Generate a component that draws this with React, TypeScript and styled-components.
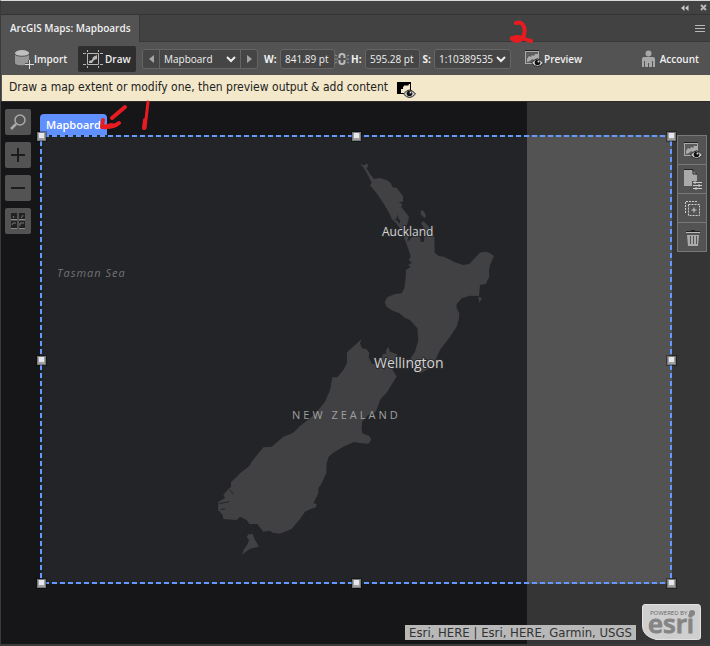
import React from "react";
import styled, { createGlobalStyle } from "styled-components";

const UI_FONT = '"Open Sans", "Noto Sans", sans-serif';
const TEXT_FONT = '"DejaVu Sans Condensed", "Noto Sans", sans-serif';

const GlobalStyle = createGlobalStyle`
  * { box-sizing: border-box; }
  body { margin: 0; background: #353535; }
  button, input, select { font: inherit; color: inherit; margin: 0; }
  svg { display: block; flex: none; }
`;

const Panel = styled.main`
  position: relative;
  display: flex;
  flex-direction: column;
  min-height: 100vh;
  border-top: 1px solid #d8d8d8;
  border-left: 1px solid #3a3a3a;
  border-bottom: 2px solid #3a3a3a;
  background: #535353;
  color: #f0f0f0;
  font: 10px/16px ${UI_FONT};
`;

const TitleBar = styled.header`
  display: flex;
  justify-content: flex-end;
  align-items: center;
  gap: 11px;
  height: 14px;
  padding-right: 3px;
  background: #424242;
  border-bottom: 1px solid #343434;
`;

const BareButton = styled.button`
  display: flex;
  align-items: center;
  padding: 0;
  border: 0;
  background: none;
  cursor: pointer;
`;

const TabRow = styled.nav`
  display: flex;
  align-items: stretch;
  justify-content: space-between;
  height: 27px;
  padding-right: 5px;
  background: linear-gradient(#424242 26px, #383838 26px);
`;

const Tab = styled.button`
  padding: 0 8px 2px 9px;
  border: 0;
  border-right: 1px solid #383838;
  background: #535353;
  font-weight: 600;
`;

const Toolbar = styled.div`
  display: flex;
  align-items: center;
  height: 33px;
  padding: 0 11px 0 5px;
`;

const ToolButton = styled.button<{ $active?: boolean }>`
  display: flex;
  align-items: center;
  gap: 2px;
  height: 26px;
  padding: 0 5px;
  border: 0;
  border-radius: 2px;
  background: ${(p) => (p.$active ? "#2e2e2e" : "transparent")};
  font-weight: 600;
  cursor: pointer;
`;

const Import = styled(ToolButton)`
  gap: 0;
  width: 72px;
  padding: 0 0 0 8px;
`;

const Draw = styled(ToolButton)`
  width: 58px;
`;

const Preview = styled(ToolButton)`
  gap: 0;
  margin-left: 9px;
`;

const Account = styled(ToolButton)`
  gap: 5px;
  margin-left: auto;
  padding: 0;
`;

const Stepper = styled.div`
  display: flex;
  height: 20px;
  margin: 0 6px;
  border: 1px solid #656565;
  border-radius: 3px;
  background: #454545;
`;

const StepButton = styled.button`
  display: grid;
  place-items: center;
  width: 16px;
  padding: 0;
  border: 0;
  background: transparent;
`;

const SelectBox = styled.div<{ $width: number; $framed?: boolean }>`
  position: relative;
  width: ${(p) => p.$width}px;
  height: ${(p) => (p.$framed ? "20px" : "18px")};
  border: solid #656565;
  border-width: ${(p) => (p.$framed ? "1px" : "0 1px")};
  border-radius: ${(p) => (p.$framed ? "3px" : "0")};
  background: #454545;

  select {
    appearance: none;
    display: block;
    width: 100%;
    height: 18px;
    padding: 0 14px 0 4px;
    border: 0;
    background: transparent;
  }

  svg {
    position: absolute;
    right: 4px;
    top: 6px;
    pointer-events: none;
  }
`;

const FieldLabel = styled.label`
  width: 14px;
  font-weight: 700;
`;

const WidthLabel = styled(FieldLabel)`
  width: 16px;
`;

const SizeInput = styled.input`
  width: 55px;
  height: 20px;
  padding: 0 4px;
  border: 1px solid #656565;
  border-radius: 3px;
  background: #454545;
`;

const LinkButton = styled(BareButton)`
  margin-right: 2px;
`;

const Hint = styled.p`
  display: flex;
  align-items: center;
  gap: 9px;
  height: 26px;
  margin: 0 0 0 1px;
  padding: 0 7px 2px;
  background: #f3e8ca;
  color: #222;
  font: 12px/16px ${TEXT_FONT};

  svg { margin-top: 6px; }
`;

const MapArea = styled.section`
  position: relative;
  flex: 1;
  display: grid;
  grid-template-columns: 39px minmax(0, 1fr) 38px;
  grid-template-rows: minmax(400px, 1fr) auto;
  padding-top: 33px;
  border-top: 1px solid #2c2c2c;
  background: linear-gradient(to left, #353535 183px, #161618 183px);
`;

const NavTools = styled.div`
  display: flex;
  flex-direction: column;
  gap: 7px;
  margin-top: -26px;
  padding-left: 4px;
`;

const NavButton = styled.button`
  display: grid;
  place-items: center;
  width: 26px;
  height: 26px;
  padding: 0;
  border: 0;
  border-radius: 2px;
  background: #535353;
`;

const Extent = styled.div`
  --h: repeating-linear-gradient(90deg, #6699ff 0 5px, transparent 5px 8px);
  --v: repeating-linear-gradient(180deg, #6699ff 0 5px, transparent 5px 8px);
  position: relative;
  background:
    var(--h) 4px 0 / 100% 2px no-repeat,
    var(--h) 4px 100% / 100% 2px no-repeat,
    var(--v) 0 6px / 2px 100% no-repeat,
    var(--v) 100% 6px / 2px 100% no-repeat,
    linear-gradient(to left, #535353 145px, #232427 145px);
`;

const ExtentTag = styled.span`
  position: absolute;
  left: 0;
  bottom: 100%;
  height: 21px;
  padding: 0 6px;
  border-radius: 4px 4px 0 0;
  background: #6090ff;
  color: #fff;
  font: 600 11px/22px ${UI_FONT};
`;

const Handle = styled.button<{ $x: number; $y: number }>`
  position: absolute;
  left: ${(p) => p.$x}%;
  top: ${(p) => p.$y}%;
  width: 9px;
  height: 9px;
  margin: ${(p) => (p.$y === 100 ? -5 : p.$y === 0 ? -3 : -4)}px 0 0 ${(p) => (p.$x === 0 ? -3 : p.$x === 100 ? -5 : -4)}px;
  padding: 0;
  border: 1px solid #777;
  outline: 1px solid #0005;
  background: linear-gradient(#e4e6f0, #e4e6f0) 50% 0 / 5px 5px no-repeat #a0a0a0;
`;

const Drawing = styled.svg`
  width: 100%;
  height: 100%;
`;

const ExtentTools = styled.div`
  align-self: start;
  justify-self: start;
  display: grid;
  grid-auto-rows: 28px;
  gap: 1px;
  width: 30px;
  margin-left: 5px;
  border: 1px solid #787878;
  background: #787878;
`;

const ExtentTool = styled.button`
  display: grid;
  place-items: center;
  padding: 2px 0 0 2px;
  border: 0;
  background: #535353;
`;

const Credits = styled.footer`
  grid-column: 1 / -1;
  display: flex;
  justify-content: flex-end;
  align-items: flex-end;
  gap: 6px;
  padding: 20px 9px 4px 0;
`;

const Sources = styled.span`
  padding: 0 4px;
  background: #b8b8b8;
  color: #333;
  font: 13px/15px ${TEXT_FONT};
`;

const Marks = styled.svg`
  position: absolute;
  left: 99px;
  top: 19px;
  pointer-events: none;
`;

const Chevron = () => (
  <svg width="10" height="7" viewBox="0 0 10 7" fill="none" stroke="#eee" strokeWidth="2">
    <path d="M1 1l4 4 4-4" />
  </svg>
);

const Eye = () => (
  <g transform="translate(6 8)">
    <path d="M.5 5Q6.500-3 12.500 5Q6.500 12 .5 5Z" fill="#ccc" stroke="#222" strokeWidth="1" />
    <circle cx="6.500" cy="4.500" r="2.800" fill="#111" />
    <circle cx="7.500" cy="3.500" r="1" fill="#ddd" />
  </g>
);

const PreviewIcon = () => (
  <svg width="19" height="18" viewBox="0 0 19 18">
    <rect x=".5" y="1.500" width="13" height="12" fill="#5c5c5c" stroke="#aaa" />
    <path d="M0 .5h14" stroke="#222" />
    <path d="M2 12V9l2-3 2 1 1-2 2 1 1-2h3v4l-4 2-2-1-2 2z" fill="#aaa" />
    <Eye />
  </svg>
);

const PreviewIconDark = () => (
  <svg width="19" height="18" viewBox="0 0 19 18">
    <path d="M0 1h14v12H0z" />
    <path d="M4 12V8h2V6l2-2 1 1 1-1 1 1 1-2h1v9z" fill="#f3e8ca" />
    <Eye />
  </svg>
);

const places: [string, number, number, number][] = [
  ["Auckland", 342, 101, 12],
  ["Wellington", 334, 233, 14],
];

const corners: [number, number, string][] = [
  [0, 0, "top left"],
  [50, 0, "top"],
  [100, 0, "top right"],
  [0, 50, "left"],
  [100, 50, "right"],
  [0, 100, "bottom left"],
  [50, 100, "bottom"],
  [100, 100, "bottom right"],
];

const NewZealand = () => (
  <Drawing viewBox="0 0 632 449" role="img" aria-label="Map of New Zealand" fontFamily={UI_FONT}>
    <g fill="#414143" transform="translate(300 15) scale(.33333)">
      <path d="M60 42L72 46 82 40 84 50 79 54 90 72 102 87 120 84 140 90 152 99 158 112 170 114 180 127 189 138V155L176 156 186 162 184 172 196 186 207 200 203 218 198 232 205 262 202 275 216 262 230 258 240 262 242 275 252 276 254 250 250 230 243 220 250 214 262 225 274 240 283 262 284 308 296 318 312 320 345 337 370 345 388 342 402 327 420 308 436 305 450 309 462 318 450 345 447 362 448 380 437 402 420 405 417 438 390 437 365 445 350 462V475L358 490 357 505 350 530 330 560 300 600 286 630 260 660 240 670 220 658 205 635 225 605 235 570 232 535 210 510 195 504 178 490 158 482 140 470 134 456 142 442 165 432 185 430 193 415 197 385 198 360 212 350 204 345 216 338 206 330 212 320 206 300 195 270 180 235 165 215 155 207 148 190 130 160 110 130 90 106 95 98 80 68 70 52Z" />
      <path d="M243 180l9 4 6 14-4 7-12-12zM414 440l12 4-8 14z" />
      <path d="M161 209l8-2 4-14 2 13 6 5-3 10-7-10z" fill="#232427" />
    </g>
    <g fill="#414143" transform="translate(160 185) scale(.33333)">
      <path d="M485 57L480 70 486 85 500 88 508 98 506 112 517 132 530 130 545 115 548 102 560 100 557 92 565 80 570 95 592 103 585 125 578 150 590 170 572 198 562 215 540 240 528 275 505 285 486 305 485 325 487 340 508 348 514 360 505 371 485 370 462 366 430 380 400 398 386 410 380 430 379 460 362 495 355 505V520L340 550 350 552 348 562 330 568 315 575 300 597 275 627 240 641 218 638 210 632 190 635 172 612 148 612 140 600 120 590 110 600 70 597 68 585 54 570 55 545 75 535 70 525 85 507 93 500V487L120 460 148 438 155 425 190 382 215 380 250 350 280 338 300 318 330 295 355 270 375 245 390 210 397 172 412 172 430 150 441 130V97Z" />
      <path d="M145 643L158 642 164 658 177 680 150 686 126 704 132 688 143 672 147 660 140 650Z" />
      <path d="M58 551L88 545M62 569L76 566M88 508L100 522" stroke="#232427" strokeWidth="3" />
    </g>
    {places.map(([name, x, y, size]) => (
      <text key={name} x={x} y={y} fontSize={size} fill="#d2d2d2" stroke="#2b2b2d" strokeWidth="2" paintOrder="stroke">
        {name}
      </text>
    ))}
    <text x="252" y="284" fontSize="11" fill="#a0a0a0" letterSpacing="3">NEW ZEALAND</text>
    <text x="17" y="142" fontSize="11" fill="#737375" fontStyle="italic" letterSpacing="1">Tasman Sea</text>
  </Drawing>
);

export default function App() {
  return (
    <>
      <GlobalStyle />
      <Panel>
        <TitleBar>
          <BareButton aria-label="Collapse">
            <svg width="8" height="6" viewBox="0 0 8 6" fill="#c8c8c8"><path d="M3.500 0v6L0 3zM7.500 0v6L4 3z" /></svg>
          </BareButton>
          <BareButton aria-label="Close">
            <svg width="7" height="7" viewBox="0 0 7 7" stroke="#b8b8b8" strokeWidth="2"><path d="M1 1l5 5M6 1L1 6" /></svg>
          </BareButton>
        </TitleBar>
        <TabRow>
          <Tab>ArcGIS Maps: Mapboards</Tab>
          <BareButton aria-label="Panel menu">
            <svg width="10" height="8" viewBox="0 0 10 8" stroke="#b8b8b8"><path d="M0 .5h10M0 3.500h10M0 6.500h10" /></svg>
          </BareButton>
        </TabRow>
        <Toolbar>
          <Import>
            <svg width="20" height="20" viewBox="0 0 20 20">
              <path d="M1 4v10c0 3 14 3 14 0V4z" fill="#979797" />
              <ellipse cx="8" cy="4" rx="7" ry="3" fill="#c0c0c0" />
              <path d="M1 5c0 3 14 3 14 0" fill="none" stroke="#555" />
              <path d="M15.500 11v9M11 15.500h9" stroke="#535353" strokeWidth="3" />
              <path d="M15.500 11v9M11 15.500h9" stroke="#ddd" />
            </svg>
            Import
          </Import>
          <Draw $active>
            <svg width="20" height="18" viewBox="0 0 20 18" fill="none" stroke="#b8b8b8">
              <path d="M4.500 3.500h11v11h-11z" />
              <path d="M0 3.500h3M0 14.500h3M17 3.500h3M17 14.500h3M4.500 0v2M15.500 0v2M4.500 16v2M15.500 16v2" />
              <path d="M14 5v4l-3 1-2 3H6v-2l3-1 1-3z" fill="#b8b8b8" stroke="none" />
            </svg>
            Draw
          </Draw>
          <Stepper>
            <StepButton aria-label="Previous mapboard">
              <svg width="5" height="8" viewBox="0 0 5 8"><path d="M5 0v8L0 4z" fill="#a5a5a5" /></svg>
            </StepButton>
            <SelectBox $width={82}>
              <select aria-label="Mapboard"><option>Mapboard</option></select>
              <Chevron />
            </SelectBox>
            <StepButton aria-label="Next mapboard">
              <svg width="5" height="8" viewBox="0 0 5 8"><path d="M0 0v8l5-4z" fill="#a5a5a5" /></svg>
            </StepButton>
          </Stepper>
          <WidthLabel htmlFor="w">W:</WidthLabel>
          <SizeInput id="w" defaultValue="841.89 pt" />
          <LinkButton aria-label="Link width and height">
            <svg width="14" height="14" viewBox="0 0 14 14" fill="none" stroke="#bbb">
              <path d="M4.500 6V4q0-2 2.500-2t2.500 2v2M4.500 8v2q0 2 2.500 2t2.500-2V8" strokeWidth="2" />
              <path d="M0 7h3M11 7h3M0 3l2 1M14 3l-2 1M0 11l2-1M14 11l-2-1" stroke="#999" />
            </svg>
          </LinkButton>
          <FieldLabel htmlFor="h">H:</FieldLabel>
          <SizeInput id="h" defaultValue="595.28 pt" />
          <FieldLabel htmlFor="s">&nbsp;S:</FieldLabel>
          <SelectBox $width={77} $framed>
            <select id="s"><option>1:10389535</option></select>
            <Chevron />
          </SelectBox>
          <Preview><PreviewIcon />Preview</Preview>
          <Account>
            <svg width="13" height="18" viewBox="0 0 13 18" fill="#a8a8a8">
              <circle cx="6.500" cy="3.500" r="3" />
              <path d="M0 17V9q0-2 2-2h9q2 0 2 2v8h-2v-6h-1v6H7v-4H6v4H3v-6H2v6z" />
            </svg>
            Account
          </Account>
        </Toolbar>
        <Hint>
          Draw a map extent or modify one, then preview output &amp; add content
          <PreviewIconDark />
        </Hint>
        <MapArea>
          <NavTools>
            <NavButton aria-label="Search">
              <svg width="18" height="18" viewBox="0 0 18 18" fill="none" stroke="#aaa">
                <circle cx="11" cy="7" r="5" strokeWidth="1.500" /><path d="M7 11l-5 5" strokeWidth="2.500" />
              </svg>
            </NavButton>
            <NavButton aria-label="Zoom in">
              <svg width="14" height="14" viewBox="0 0 14 14" stroke="#1c1c1c" strokeWidth="2"><path d="M0 7h14M7 0v14" /></svg>
            </NavButton>
            <NavButton aria-label="Zoom out">
              <svg width="14" height="14" viewBox="0 0 14 14" stroke="#1c1c1c" strokeWidth="2"><path d="M0 7h14" /></svg>
            </NavButton>
            <NavButton aria-label="Basemaps">
              <svg width="14" height="16" viewBox="0 0 14 16">
                <path d="M0 0h6v6H0zM8 0h6v6H8zM0 8h6v7H0zM8 8h6v7H8z" fill="#222" />
                <path d="M0 6.500h6M8 6.500h6M0 15.500h6M8 15.500h6" stroke="#888" />
                <path d="M2 5l1-2M10 5l1-1 1-2M1 12l1-2h3M9 13v-3h4" stroke="#777" fill="none" />
              </svg>
            </NavButton>
          </NavTools>
          <Extent>
            <ExtentTag>Mapboard</ExtentTag>
            <NewZealand />
            {corners.map(([x, y, name]) => (
              <Handle key={name} $x={x} $y={y} aria-label={`Resize ${name}`} />
            ))}
          </Extent>
          <ExtentTools>
            <ExtentTool aria-label="Preview mapboard"><PreviewIcon /></ExtentTool>
            <ExtentTool aria-label="Page options">
              <svg width="18" height="22" viewBox="0 0 18 22">
                <path d="M0 1h8l5 5v11H0z" fill="#aaa" /><path d="M0 .5h9M9 1v4h4" stroke="#222" fill="none" />
                <path d="M8 12h10v9H8z" fill="#535353" />
                <path d="M9 13.500h9M9 16.500h9M9 19.500h9M11 12v3M15 15v3M12 18v3" stroke="#ccc" />
              </svg>
            </ExtentTool>
            <ExtentTool aria-label="Duplicate mapboard">
              <svg width="16" height="16" viewBox="0 0 16 16" fill="none" stroke="#ccc">
                <path d="M12 .5H.5V12" strokeDasharray="2 1" />
                <rect x="3.500" y="3.500" width="11" height="11" strokeDasharray="2 1" />
                <path d="M6.500 9h5M9 6.500v5" />
              </svg>
            </ExtentTool>
            <ExtentTool aria-label="Delete mapboard">
              <svg width="14" height="16" viewBox="0 0 14 16">
                <path d="M0 1.500h14M5 .5h4" stroke="#222" /><path d="M0 2.500h14" stroke="#bbb" />
                <path d="M1 5h12l-1 11H2z" fill="#aaa" /><path d="M4.500 6v8M7.500 6v8M10.500 6v8" stroke="#555" />
              </svg>
            </ExtentTool>
          </ExtentTools>
          <Credits>
            <Sources>Esri, HERE | Esri, HERE, Garmin, USGS</Sources>
            <svg width="59" height="36" viewBox="0 0 59 36" role="img" aria-label="Powered by Esri" fontFamily={UI_FONT}>
              <path d="M3 .5h53q2.500 0 2.500 3v30q0 2-3 2H14Q.5 32 .5 22V3q0-2.500 2.500-2.500z" fill="#cfcfcf" stroke="#e2e2e2" />
              <text x="8" y="11" fontSize="6" fill="#666">POWERED BY</text>
              <text x="6" y="29" fontSize="26" fontWeight="600" fill="#858585" stroke="#858585">esri</text>
              <circle cx="50" cy="9" r="3" fill="#858585" />
            </svg>
          </Credits>
        </MapArea>
        <Marks width="440" height="115" viewBox="100 20 440 115" fill="none" stroke="#e81c20" strokeWidth="4" strokeLinecap="round" strokeLinejoin="round">
          <path d="M516 23q6-2 8 4t-2 12q-4 3-8 1t-1-2q4-2 9 0t9 3" />
          <path d="M125 107l-13 11" />
          <path d="M119 123q-6 5-17 4l1-7M103 127l9-2" />
          <path d="M148 102l-3 26" strokeWidth="3" />
          <path d="M145 120l-1 8" />
        </Marks>
      </Panel>
    </>
  );
}
